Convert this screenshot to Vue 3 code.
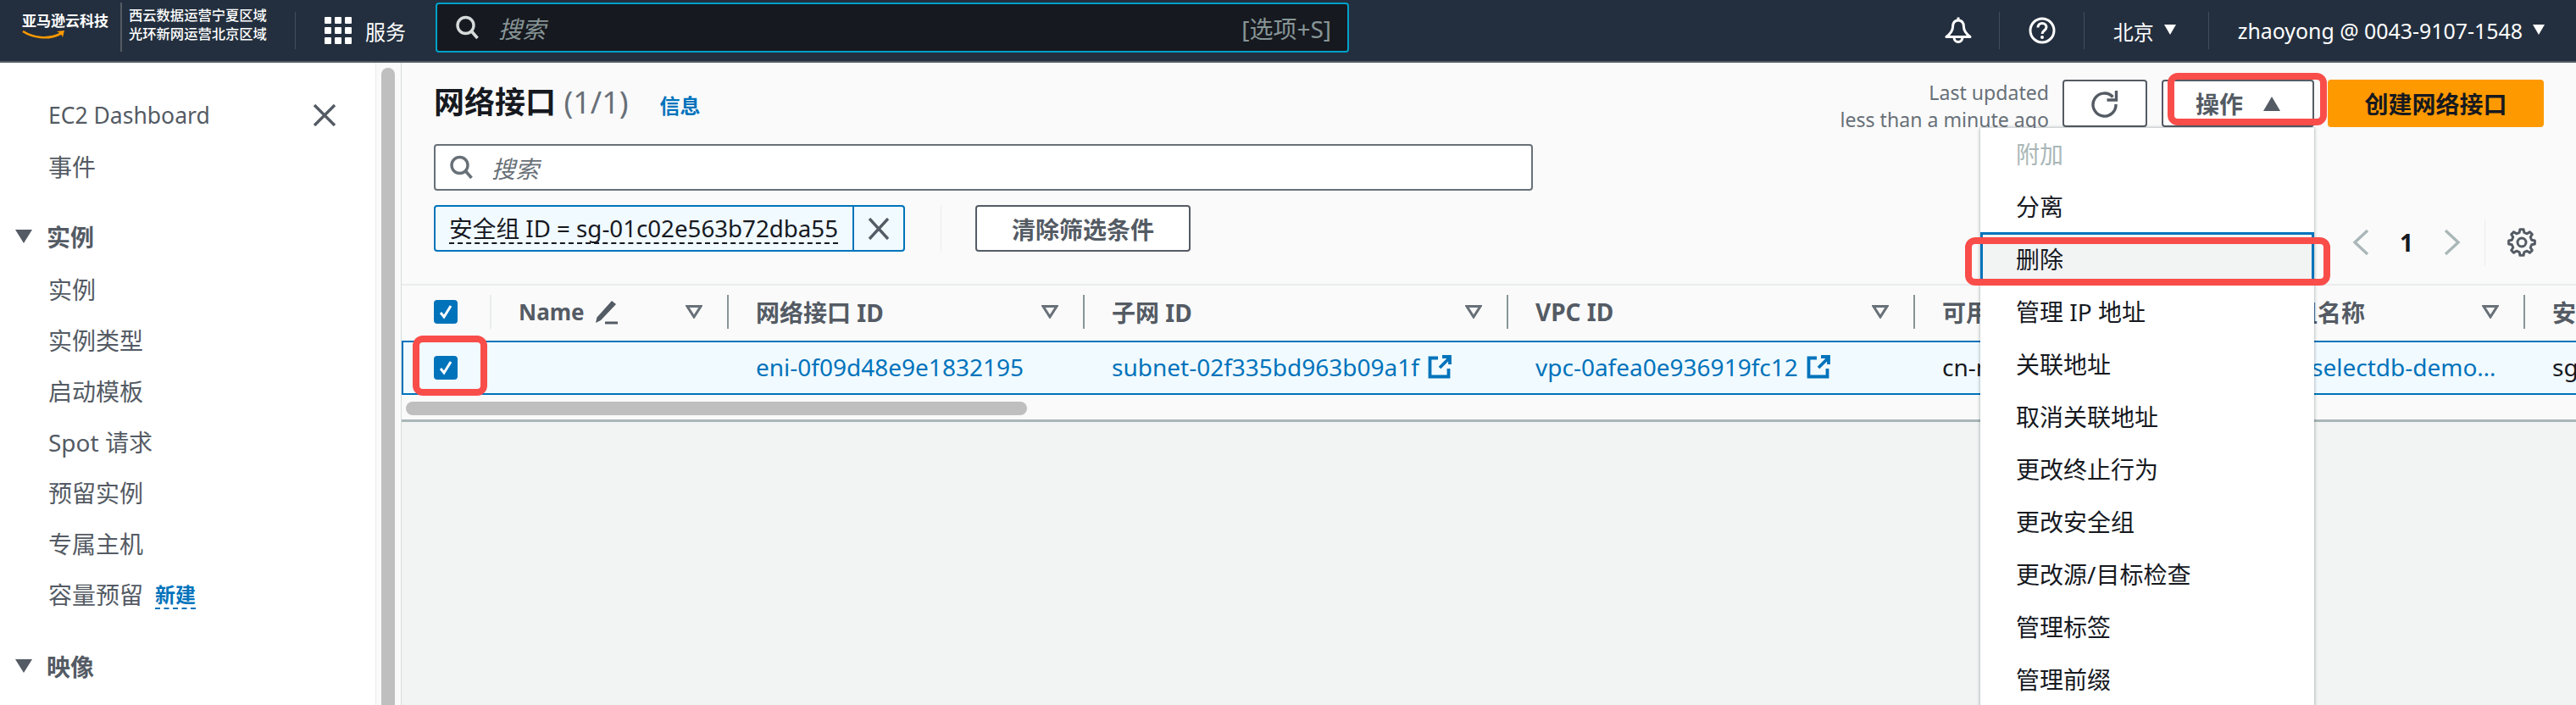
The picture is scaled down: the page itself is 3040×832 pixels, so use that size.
<script setup>
const regions = ['西云数据运营宁夏区域', '光环新网运营北京区域']
const sideGroupOne = ['实例', '实例类型', '启动模板', 'Spot 请求', '预留实例', '专属主机']
const menuItems = ['分离', '删除', '管理 IP 地址', '关联地址', '取消关联地址', '更改终止行为', '更改安全组', '更改源/目标检查', '管理标签', '管理前缀']
const columns = [
  { label: '网络接口 ID' },
  { label: '子网 ID' },
  { label: 'VPC ID' },
  { label: '可用区' },
  { label: '安全组名称' },
]

// Outline of the table-preferences gear: eight flat teeth around a ring.
function gearPath(teeth, outer, inner, c) {
  const pts = []
  const step = (Math.PI * 2) / teeth
  for (let i = 0; i < teeth; i++) {
    const a = i * step - Math.PI / 2
    const spots = [[-0.3, inner], [-0.17, outer], [0.17, outer], [0.3, inner]]
    for (const [f, r] of spots) {
      const t = a + f * step
      pts.push(`${(c + r * Math.cos(t)).toFixed(2)} ${(c + r * Math.sin(t)).toFixed(2)}`)
    }
  }
  return 'M' + pts.join('L') + 'Z'
}
const gear = gearPath(8, 15.5, 12, 17)
</script>

<template>
  <div class="app">
    <header class="topbar">
      <div class="logo">
        <span class="logo-text">亚马逊云科技</span>
        <svg class="smile" width="52" height="11" viewBox="0 0 52 11">
          <path d="M1 1C12 8 30 12 46 3.500" fill="none" stroke="#ff9900" stroke-width="2.600" />
          <path d="M41 1L50 0 48 8C47 5 45 3 41 1Z" fill="#ff9900" />
        </svg>
      </div>
      <div class="region-text">
        <span v-for="r in regions" :key="r">{{ r }}</span>
      </div>
      <div class="bar-div services-div"></div>
      <div class="dots"><i v-for="n in 9" :key="n"></i></div>
      <span class="services">服务</span>
      <div class="global-search">
        <svg width="30" height="30" viewBox="0 0 30 30" class="g-icon">
          <circle cx="12.500" cy="12" r="9.500" fill="none" stroke="#d5dbdb" stroke-width="3.400" />
          <path d="M19.500 19l7 8" stroke="#d5dbdb" stroke-width="3.600" />
        </svg>
        <em>搜索</em>
        <span class="shortcut">[选项+S]</span>
      </div>
      <div class="top-right">
        <svg class="bell" width="32" height="34" viewBox="0 0 32 34">
          <path d="M16 1.500v3.500M16 5c-4.500 0-6.500 3.500-6.500 8 0 5-3 8-7.500 11.500h28c-4.500-3.500-7.500-6.500-7.500-11.500 0-4.500-2-8-6.500-8Z" fill="none" stroke="#fff" stroke-width="3" stroke-linejoin="round" />
          <path d="M11 25a5 5.500 0 0 0 10 0" fill="none" stroke="#fff" stroke-width="3" />
        </svg>
        <div class="bar-div d1"></div>
        <svg class="help" width="32" height="32" viewBox="0 0 32 32">
          <circle cx="16" cy="16" r="14" fill="none" stroke="#fff" stroke-width="3" />
          <path d="M11 12.500c0-3 2-5 5-5s5 2 5 4.500c0 4-5 4-5 8" fill="none" stroke="#fff" stroke-width="3" />
          <circle cx="16" cy="24" r="2" fill="#fff" />
        </svg>
        <div class="bar-div d2"></div>
        <span class="top-label region">北京</span>
        <span class="top-caret"></span>
        <div class="bar-div d3"></div>
        <span class="top-label account">zhaoyong @ 0043-9107-1548</span>
        <span class="top-caret"></span>
      </div>
    </header>

    <div class="body">
      <aside class="side">
        <div class="side-row first">
          <span>EC2 Dashboard</span>
          <svg width="28" height="26" viewBox="0 0 28 26" class="side-close">
            <path d="M2 1l24 24M26 1L2 25" stroke="#545b64" stroke-width="3.400" />
          </svg>
        </div>
        <div class="side-row">事件</div>
        <div class="side-head h1"><i class="tri"></i>实例</div>
        <div v-for="s in sideGroupOne" :key="s" class="side-row">{{ s }}</div>
        <div class="side-row">容量预留<b class="new">新建</b></div>
        <div class="side-head h2"><i class="tri"></i>映像</div>
      </aside>

      <div class="track"><div class="track-thumb"></div></div>

      <main class="main">
        <section class="panel">
          <div class="panel-head">
            <div class="title-row">
              <h1>网络接口 <span class="count">(1/1)</span></h1>
              <a class="info">信息</a>
            </div>
            <div class="updated">
              <span>Last updated</span>
              <span>less than a minute ago</span>
            </div>
            <button class="btn refresh">
              <svg width="34" height="34" viewBox="0 0 34 34">
                <path d="M26.500 9.500A13.500 13.500 0 1 0 30 18" fill="none" stroke="#545b64" stroke-width="3.400" />
                <path d="M30.500 2v11h-11" fill="none" stroke="#545b64" stroke-width="3.400" />
              </svg>
            </button>
            <button class="btn actions">操作<i class="up"></i></button>
            <button class="btn primary">创建网络接口</button>
          </div>

          <div class="search">
            <svg width="30" height="30" viewBox="0 0 30 30">
              <circle cx="12.500" cy="12" r="9.500" fill="none" stroke="#687078" stroke-width="3.400" />
              <path d="M19.500 19l7 8" stroke="#687078" stroke-width="3.600" />
            </svg>
            <em>搜索</em>
          </div>

          <div class="filter-row">
            <div class="token">
              <span class="token-text"><span class="dashed">安全组 ID = sg-01c02e563b72dba55</span></span>
              <span class="token-x">
                <svg width="26" height="26" viewBox="0 0 26 26"><path d="M2 1l22 24M24 1L2 25" stroke="#545b64" stroke-width="3.400" /></svg>
              </span>
            </div>
            <div class="v-line"></div>
            <button class="btn clear">清除筛选条件</button>
            <div class="pager">
              <svg width="20" height="32" viewBox="0 0 20 32"><path d="M18 2L3 16l15 14" fill="none" stroke="#aab7b8" stroke-width="3.400" /></svg>
              <b>1</b>
              <svg width="20" height="32" viewBox="0 0 20 32"><path d="M2 2l15 14L2 30" fill="none" stroke="#aab7b8" stroke-width="3.400" /></svg>
              <div class="pager-line"></div>
              <svg width="34" height="34" viewBox="0 0 34 34">
                <path :d="gear" fill="none" stroke="#545b64" stroke-width="3" stroke-linejoin="round" />
                <circle cx="17" cy="17" r="5" fill="none" stroke="#545b64" stroke-width="3" />
              </svg>
            </div>
          </div>

          <div class="table">
            <div class="tr thead">
              <div class="cell check-cell"><span class="check"><svg width="16" height="18" viewBox="0 0 16 18"><path d="M2 10l4 5 8-13" fill="none" stroke="#fff" stroke-width="3" /></svg></span></div>
              <div class="cell th name-th light">
                <span class="latin-head">Name</span>
                <svg class="pencil" width="28" height="29" viewBox="0 0 28 29">
                  <path d="M21 1l5 4L8 24 2 27l1.500-6.500Z" fill="#545b64" />
                  <path d="M13 27h15" stroke="#545b64" stroke-width="3" />
                </svg>
                <svg class="funnel" width="20" height="16" viewBox="0 0 20 16"><path d="M2 1.500h16L10 14Z" fill="none" stroke="#687078" stroke-width="3" /></svg>
              </div>
              <div v-for="c in columns" :key="c.label" class="cell th">
                <span>{{ c.label }}</span>
                <svg class="funnel" width="20" height="16" viewBox="0 0 20 16"><path d="M2 1.500h16L10 14Z" fill="none" stroke="#687078" stroke-width="3" /></svg>
              </div>
              <div class="cell th"><span>安全组 ID</span></div>
            </div>

            <div class="tr tbody">
              <div class="cell check-cell"><span class="check"><svg width="16" height="18" viewBox="0 0 16 18"><path d="M2 10l4 5 8-13" fill="none" stroke="#fff" stroke-width="3" /></svg></span></div>
              <div class="cell"></div>
              <div class="cell link">eni-0f09d48e9e1832195</div>
              <div class="cell link">subnet-02f335bd963b09a1f
                <svg class="ext" width="28" height="28" viewBox="0 0 28 28"><path d="M12 3.500H2.500v22h22V16M14 15L26 3M17 2h9v9" fill="none" stroke="#0073bb" stroke-width="3.800" /></svg>
              </div>
              <div class="cell link">vpc-0afea0e936919fc12
                <svg class="ext" width="28" height="28" viewBox="0 0 28 28"><path d="M12 3.500H2.500v22h22V16M14 15L26 3M17 2h9v9" fill="none" stroke="#0073bb" stroke-width="3.800" /></svg>
              </div>
              <div class="cell dark">cn-north-1a</div>
              <div class="cell link sg-name">selectdb-demo…</div>
              <div class="cell dark">sg-01c02e563b72dba55</div>
            </div>
            <div class="hscroll"><div class="hthumb"></div></div>
          </div>
        </section>
      </main>
    </div>

    <ul class="menu">
      <li class="disabled">附加</li>
      <li v-for="m in menuItems" :key="m" :class="{ hot: m === '删除' }">{{ m }}</li>
    </ul>

    <div class="mark mark-actions"></div>
    <div class="mark mark-delete"></div>
    <div class="mark mark-check"></div>
  </div>
</template>

<style>
html, body { margin: 0; overflow: hidden; background: #f2f3f3; }
</style>

<style scoped>
.app { position: relative; width: 3040px; height: 832px; overflow: hidden; display: flex; flex-direction: column; font-family: "Noto Sans", "Noto Sans CJK SC", sans-serif; font-size: 28px; color: #16191f; background: #f2f3f3; }
button { font-family: inherit; padding: 0; margin: 0; }
h1, ul { margin: 0; padding: 0; }
i, em { display: block; }

.topbar { height: 72px; flex: none; border-bottom: 2px solid #545b64; background: #232f3e; display: flex; align-items: center; color: #fff; }
.logo { width: 103px; margin-left: 26px; margin-right: 13px; display: flex; flex-direction: column; height: 46px; padding-top: 3px; box-sizing: border-box; }
.logo-text { font-size: 17px; line-height: 18px; font-weight: 700; white-space: nowrap; }
.smile { display: block; margin-top: 2px; flex: none; }
.region-text { align-self: flex-start; margin-top: 3px; height: 58px; box-sizing: content-box; border-left: 2px solid #545b64; padding: 4px 0 0 8px; height: 54px; width: 164px; display: flex; flex-direction: column; font-size: 16.300px; line-height: 22px; font-weight: 500; white-space: nowrap; }
.bar-div { width: 1px; height: 44px; background: #414d5c; flex: none; }
.services-div { margin-left: 32px; margin-right: 34px; }
.dots { width: 32px; height: 32px; display: grid; grid-template-columns: repeat(3, 8px); grid-auto-rows: 8px; gap: 4px; }
.dots i { background: #fff; border-radius: 1px; }
.services { margin-left: 16px; font-size: 24px; width: 48px; white-space: nowrap; }
.global-search { align-self: flex-start; margin: 3px 0 0 35px; width: 1078px; height: 59px; box-sizing: border-box; background: #16191f; border: 2px solid #00a1c9; border-radius: 4px; display: flex; align-items: center; padding-left: 21px; color: #879596; }
.global-search em { margin-left: 21px; font-size: 28px; font-style: italic; }
.shortcut { margin-left: auto; margin-right: 19px; font-size: 28px; }
.top-right { margin-left: auto; display: flex; align-items: center; padding-right: 37px; height: 72px; }
.d1 { margin-left: 32px; }
.help { margin-left: 34px; }
.d2 { margin-left: 33px; }
.top-label { white-space: nowrap; font-size: 24px; }
.region { margin-left: 34px; }
.account { margin-left: 34px; font-size: 24.900px; }
.top-caret { width: 0; height: 0; margin-left: 12px; border-left: 7.500px solid transparent; border-right: 7.500px solid transparent; border-top: 12px solid #fff; margin-top: -2px; }
.d3 { margin-left: 38px; }

.body { flex: 1; min-height: 0; display: flex; }
.side { width: 444px; flex: none; box-sizing: border-box; background: #fff; border-right: 1px solid #eaeded; padding-top: 32px; color: #545b64; }
.side-row { height: 60px; display: flex; align-items: center; padding-left: 57px; white-space: nowrap; }
.side-row.first { padding-right: 46px; justify-content: space-between; font-size: 26.500px; }
.side-close { flex: none; }
.side-head { height: 60px; display: flex; align-items: center; padding-left: 18px; font-weight: 700; }
.h1 { margin-top: 23px; margin-bottom: 2px; }
.h2 { margin-top: 25px; }
.tri { width: 0; height: 0; border-left: 10px solid transparent; border-right: 10px solid transparent; border-top: 16px solid #545b64; margin-right: 17px; }
.new { margin-left: 14px; color: #0073bb; font-size: 24px; font-weight: 700; border-bottom: 2px dashed #0073bb; line-height: 30px; margin-top: 4px; }
.track { width: 29px; flex: none; background: #fafafa; padding: 6px 0 0 6px; box-sizing: border-box; }
.track-thumb { width: 16px; height: 100%; background: #bfbfbf; border-radius: 8px 8px 0 0; }

.main { flex: 1; min-width: 0; background: #f2f3f3; border-left: 1px solid #d5dbdb; }
.panel { background: #fafafa; height: 424px; box-sizing: border-box; border-bottom: 3px solid #aab7b8; padding-top: 20px; }
.panel-head { height: 56px; display: flex; align-items: center; padding: 0 38px; }
.title-row { display: flex; align-items: center; margin-right: auto; margin-top: -2px; }
h1 { font-size: 36px; font-weight: 700; line-height: 44px; white-space: nowrap; }
.count { font-weight: 400; color: #687078; }
.info { color: #0073bb; font-size: 24px; font-weight: 700; margin-left: 37px; margin-top: 4px; }
.updated { display: flex; flex-direction: column; align-items: flex-end; font-size: 23.100px; line-height: 32px; color: #687078; margin-right: 16px; margin-top: 6px; white-space: nowrap; }
.btn { height: 56px; box-sizing: border-box; background: #fff; border: 2px solid #545b64; border-radius: 4px; color: #545b64; font-size: 28px; font-weight: 700; display: flex; align-items: center; justify-content: center; }
.refresh { width: 100px; }
.actions { width: 180px; margin-left: 17px; gap: 24px; }
.up { width: 0; height: 0; border-left: 10px solid transparent; border-right: 10px solid transparent; border-bottom: 17px solid #545b64; }
.primary { width: 255px; margin-left: 16px; background: #ff9900; border-color: #ff9900; color: #16191f; }

.search { margin: 20px 0 0 38px; width: 1297px; height: 55px; box-sizing: border-box; background: #fff; border: 2px solid #687078; border-radius: 4px; display: flex; align-items: center; padding-left: 16px; color: #687078; }
.search em { margin-left: 20px; font-size: 28px; font-style: italic; }

.filter-row { display: flex; margin: 17px 38px 0; height: 93px; }
.token { width: 556px; height: 55px; box-sizing: border-box; background: #f1faff; border: 2px solid #0073bb; border-radius: 4px; display: flex; }
.token-text { flex: 1; min-width: 0; display: flex; align-items: center; padding-left: 16px; font-size: 27.700px; white-space: nowrap; overflow: hidden; }
.dashed { border-bottom: 2px dashed #16191f; line-height: 34px; }
.token-x { width: 58px; border-left: 2px solid #0073bb; display: flex; align-items: center; justify-content: center; flex: none; }
.v-line { width: 1px; height: 55px; background: #eaeded; margin-left: 42px; }
.clear { width: 254px; height: 55px; margin-left: 40px; }
.pager { margin-left: auto; margin-top: 16px; height: 56px; display: flex; align-items: center; padding-right: 9px; }
.pager b { font-size: 28px; width: 16px; margin: 0 36px; text-align: center; line-height: 1; }
.pager-line { width: 1px; height: 55px; background: #eaeded; margin: 0 26px 0 28px; }

.table { border-top: 2px solid #eaeded; }
.tr { display: grid; grid-template-columns: 104px 280px 420px 500px 480px 359px 361px 200px; white-space: nowrap; }
.thead { height: 65px; box-sizing: border-box; align-items: center; padding-bottom: 3px; }
.cell { min-width: 0; display: flex; align-items: center; padding-left: 34px; height: 40px; overflow: hidden; }
.check-cell { padding-left: 38px; overflow: visible; }
.th { border-left: 2px solid #879596; box-sizing: border-box; font-weight: 700; color: #545b64; padding: 0 29px 0 32px; }
.th.light { border-left-color: #eaeded; }
.latin-head { font-size: 26px; }
.funnel { margin-left: auto; flex: none; }
.pencil { margin-left: 11px; flex: none; }
.check { width: 28px; height: 28px; border-radius: 4px; background: #0073bb; display: flex; align-items: center; justify-content: center; }
.tbody { height: 64px; box-sizing: border-box; align-items: center; background: #f1faff; border: 2px solid #0073bb; border-width: 2px 0 2px 2px; grid-template-columns: 102px 280px 420px 500px 480px 359px 361px 200px; }
.tbody .check-cell { padding-left: 36px; }
.tbody .link, .tbody .dark { padding-bottom: 2px; box-sizing: border-box; }
.link { color: #0073bb; gap: 10px; }
.dark { color: #16191f; }
.tbody .sg-name { padding-left: 111px; }
.hscroll { height: 29px; box-sizing: border-box; padding: 8px 0 0 5px; }
.hthumb { width: 733px; height: 16px; background: #bfbfbf; border-radius: 8px; }

.menu { position: absolute; left: 2337px; top: 151px; width: 394px; height: 700px; box-sizing: border-box; list-style: none; background: #fff; box-shadow: 0 0 4px rgba(0, 28, 36, .4); color: #16191f; z-index: 2; }
.menu li { height: 62px; box-sizing: border-box; display: flex; align-items: center; padding: 0 0 2px 42px; white-space: nowrap; }
.menu .disabled { color: #aab7b8; }
.menu .hot { background: #f2f3f3; border: 3px solid #0073bb; padding-left: 39px; margin-top: -1px; height: 63px; }

.mark { position: absolute; box-sizing: border-box; border: 8px solid #f94d4a; border-radius: 12px; z-index: 3; }
.mark-actions { left: 2558px; top: 86px; width: 188px; height: 62px; }
.mark-delete { left: 2319px; top: 280px; width: 431px; height: 57px; }
.mark-check { left: 487px; top: 396px; width: 88px; height: 71px; }
</style>
